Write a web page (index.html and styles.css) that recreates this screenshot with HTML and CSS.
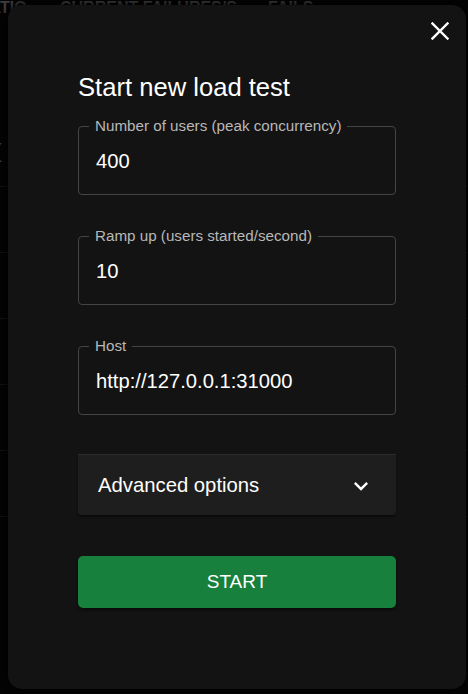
FILE: index.html
```html
<!DOCTYPE html>
<html lang="en">
<head>
<meta charset="utf-8">
<title>Start new load test</title>
<link rel="stylesheet" href="styles.css">
</head>
<body>
<div class="page">
  <div class="thead">
    <span class="th th-a">RATIO</span>
    <span class="th th-b">CURRENT FAILURES/S</span>
    <span class="th th-c">FAILS</span>
  </div>
  <div class="row row-first"><span class="paren">(</span></div>
  <div class="row"></div>
  <div class="row"></div>
  <div class="row"></div>
  <div class="row"></div>
  <div class="row"></div>
</div>

<div class="backdrop"></div>

<div class="modal" role="dialog" aria-labelledby="dlg-title">
  <div class="modal-head">
    <button class="close" aria-label="Close">
      <svg viewBox="0 0 18 18" width="18" height="18"><path d="M1.5 1.5 16.5 16.5M16.5 1.5 1.5 16.5" stroke="#fff" stroke-width="2.4" stroke-linecap="square" fill="none"/></svg>
    </button>
  </div>
  <form class="form">
    <h2 id="dlg-title" class="title">Start new load test</h2>
    <fieldset class="field">
      <legend class="field-label">Number of users (peak concurrency)</legend>
      <input class="field-input" type="text" value="400">
    </fieldset>
    <fieldset class="field">
      <legend class="field-label">Ramp up (users started/second)</legend>
      <input class="field-input" type="text" value="10">
    </fieldset>
    <fieldset class="field field-last">
      <legend class="field-label">Host</legend>
      <input class="field-input" type="text" value="http://127.0.0.1:31000">
    </fieldset>
    <div class="accordion">
      <span class="accordion-text">Advanced options</span>
      <svg class="chevron" viewBox="0 0 24 24" width="28" height="28"><path d="M16.59 8.59 12 13.17 7.41 8.59 6 10l6 6 6-6z" fill="#fff"/></svg>
    </div>
    <button type="button" class="start">START</button>
  </form>
</div>
</body>
</html>
```
FILE: styles.css
```css
html, body {
  margin: 0;
  padding: 0;
}
body {
  width: 468px;
  height: 694px;
  overflow: hidden;
  background: #0b0b0b;
  font-family: "Liberation Sans", Arial, sans-serif;
  position: relative;
}

/* page behind the dialog */
.page {
  margin-top: -12px;
}
.thead {
  height: 28px;
  display: flex;
  align-items: flex-end;
  color: #9a9a9a;
  font-size: 16px;
  font-weight: 700;
  white-space: nowrap;
}
.th { display: block; line-height: 16px; }
.th-a { margin-left: -22px; width: 82px; }
.th-b { width: 208px; }
.row {
  height: 65px;
  border-bottom: 1px solid #2e2e2e;
  color: #7aa7d6;
  font-size: 20px;
}
.row-first { height: 170px; }
.paren {
  display: block;
  padding-top: 125px;
  margin-left: -5px;
  line-height: 20px;
}

.backdrop {
  position: absolute;
  inset: 0;
  background: rgba(0, 0, 0, 0.6);
}

/* dialog */
.modal {
  position: absolute;
  left: 8px;
  top: 5px;
  width: 458px;
  height: 684px;
  box-sizing: border-box;
  background: #131313;
  border-radius: 14px;
  box-shadow: 0 0 6px 2px rgba(0, 0, 0, 0.8);
  padding: 14px 14px 0 70px;
  display: flex;
  flex-direction: column;
}
.modal-head {
  display: flex;
  justify-content: flex-end;
  height: 24px;
}
.close {
  width: 24px;
  height: 24px;
  padding: 3px;
  border: 0;
  background: transparent;
  display: flex;
  align-items: center;
  justify-content: center;
  cursor: pointer;
}
.form {
  width: 318px;
  margin: 28px 0 0;
  display: flex;
  flex-direction: column;
}
.title {
  margin: 0 0 15px;
  font-size: 25.6px;
  line-height: 32px;
  font-weight: 400;
  color: #fff;
}
.field {
  margin: 0 0 33px;
  padding: 15px 17px 21px;
  border: 1px solid #444;
  border-radius: 4px;
  min-width: 0;
}
.field-last { margin-bottom: 39px; }
.field-label {
  margin-left: -7px;
  padding: 0 6px;
  font-size: 15.2px;
  line-height: 16px;
  color: #b8b8b8;
}
.field-input {
  display: block;
  width: 100%;
  box-sizing: border-box;
  margin: 0;
  padding: 0;
  border: 0;
  outline: none;
  background: transparent;
  color: #fff;
  font-family: "Liberation Sans", Arial, sans-serif;
  font-size: 20.2px;
  line-height: 24px;
  height: 24px;
}
.accordion {
  height: 60px;
  border-top: 1px solid #2b2b2b;
  background: #1e1e1e;
  border-radius: 0 0 4px 4px;
  box-shadow: 0 2px 2px rgba(0, 0, 0, 0.4);
  display: flex;
  align-items: center;
  justify-content: space-between;
  padding: 0 21px 0 20px;
}
.accordion-text {
  color: #fff;
  font-size: 20.3px;
  line-height: 24px;
}
.chevron { display: block; margin-top: 2px; }
.start {
  margin-top: 41px;
  height: 52px;
  border: 0;
  border-radius: 5px;
  background: #16803c;
  color: #fff;
  font-family: "Liberation Sans", Arial, sans-serif;
  font-size: 19px;
  letter-spacing: 0;
  box-shadow: 0 2px 3px rgba(0, 0, 0, 0.5);
  cursor: pointer;
}
```
